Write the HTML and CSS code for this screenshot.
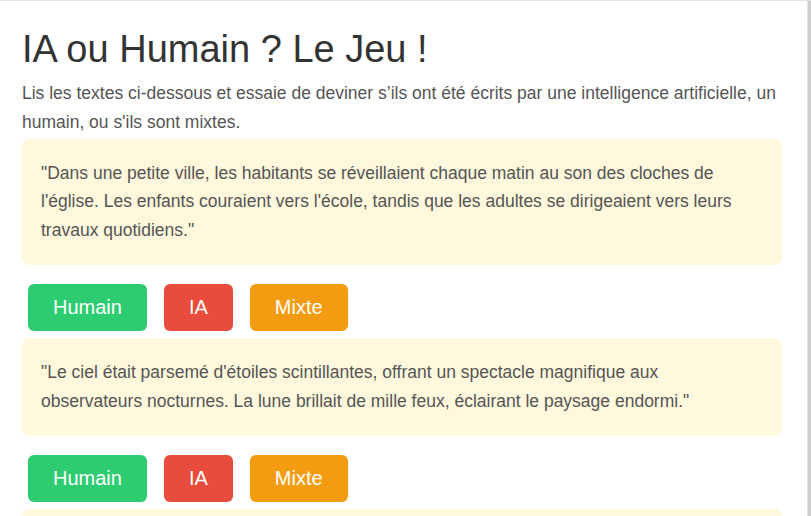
FILE: index.html
```html
<!DOCTYPE html>
<html lang="fr">
<head>
<meta charset="utf-8">
<title>IA ou Humain ? Le Jeu !</title>
<link rel="stylesheet" href="styles.css">
</head>
<body>
<div class="frame">
  <main class="page">
    <h1 class="title">IA ou Humain ? Le Jeu !</h1>
    <p class="intro">Lis les textes ci-dessous et essaie de deviner s’ils ont été écrits par une intelligence artificielle, un humain, ou s'ils sont mixtes.</p>

    <div class="card">"Dans une petite ville, les habitants se réveillaient chaque matin au son des cloches de l'église. Les enfants couraient vers l'école, tandis que les adultes se dirigeaient vers leurs travaux quotidiens."</div>
    <div class="choices">
      <button class="btn btn-human">Humain</button>
      <button class="btn btn-ai">IA</button>
      <button class="btn btn-mix">Mixte</button>
    </div>

    <div class="card">"Le ciel était parsemé d'étoiles scintillantes, offrant un spectacle magnifique aux observateurs nocturnes. La lune brillait de mille feux, éclairant le paysage endormi."</div>
    <div class="choices">
      <button class="btn btn-human">Humain</button>
      <button class="btn btn-ai">IA</button>
      <button class="btn btn-mix">Mixte</button>
    </div>

    <div class="card card-empty"></div>
  </main>
  <div class="rail"></div>
</div>
</body>
</html>
```

FILE: styles.css
```css
html, body {
  margin: 0;
  padding: 0;
  height: 100%;
  overflow: hidden;
  background: #ffffff;
}

body {
  font-family: "Liberation Sans", Arial, sans-serif;
  color: #555555;
}

.frame {
  display: flex;
  height: 100vh;
  border-top: 1px solid #e2e2e2;
  box-sizing: border-box;
}

.page {
  flex: 1;
  padding: 26px 25px 0 22px;
  min-width: 0;
}

.rail {
  width: 3px;
  background: #cdcdcd;
  border-left: 1px solid #e4e4e4;
}

.title {
  margin: 0 0 8px 0;
  font-size: 38px;
  font-weight: normal;
  line-height: 44px;
  color: #333333;
}

.intro {
  margin: 0 0 2px 0;
  font-size: 17.5px;
  line-height: 28.8px;
  color: #555555;
}

.card {
  background: #fff8dc;
  border-radius: 8px;
  padding: 20px 19px;
  font-size: 17.5px;
  line-height: 28.8px;
  color: #555555;
}

.card-empty {
  height: 40px;
}

.choices {
  display: flex;
  gap: 17px;
  padding: 19px 0 7px 6px;
}

.btn {
  font-family: "Liberation Sans", Arial, sans-serif;
  font-size: 20px;
  line-height: 23px;
  padding: 12px 25px;
  border: none;
  border-radius: 6px;
  color: #ffffff;
  cursor: pointer;
}

.btn-human { background: #2ecc71; }
.btn-ai { background: #e74c3c; }
.btn-mix { background: #f39c12; }
```
